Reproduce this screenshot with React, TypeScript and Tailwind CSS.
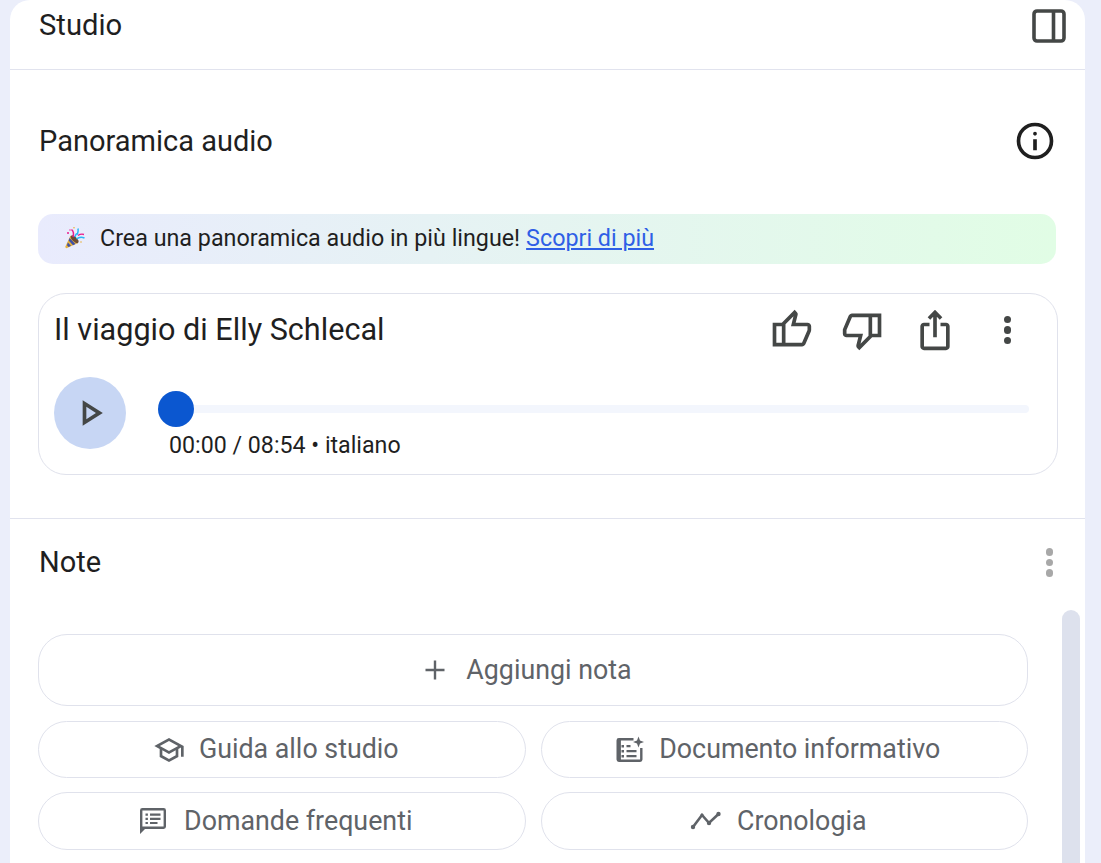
import React from "react";

const P = ({ d, className }: { d: string; className?: string }) => (
  <svg viewBox="0 -960 960 960" fill="currentColor" className={className}>
    <path d={d} />
  </svg>
);

const Party = () => (
  <svg viewBox="0 0 24 24" className="w-[24px] h-[24px]">
    <path d="M7.5 9.5 L15 17 L4 22 Q2.2 22.6 2.4 20.6 Z" fill="#e8b23c" />
    <path d="M6.6 12 L12.5 18 L10 19.2 L5.6 14.6 Z" fill="#3f51a8" />
    <path d="M4.8 16.5 L8 19.8 L5.6 21 L4 19.2 Z" fill="#3f51a8" />
    <ellipse cx="11.6" cy="13.2" rx="2.3" ry="5" transform="rotate(-45 11.6 13.2)" fill="#6b4a35" />
    <path d="M8.5 3.5 Q11.5 6 10 11" stroke="#e91e8c" strokeWidth="1.5" fill="none" />
    <path d="M12 11 Q13 7 14.5 8 Q15.5 5 15 2.5" stroke="#29b6f6" strokeWidth="1.5" fill="none" />
    <path d="M13.5 13 Q17 10 21.5 12" stroke="#29b6f6" strokeWidth="1.5" fill="none" />
    <path d="M15 9.5 Q18 7.5 21 8.5" stroke="#e91e8c" strokeWidth="1.4" fill="none" />
    <circle cx="5" cy="7" r="1" fill="#e91e8c" />
    <circle cx="11" cy="1.8" r="0.8" fill="#e8b23c" />
    <circle cx="18" cy="16" r="0.8" fill="#e8b23c" />
    <circle cx="7" cy="4" r="0.7" fill="#e91e8c" />
  </svg>
);

const Dots = ({ className }: { className: string }) => (
  <div className={`flex flex-col gap-[3px] ${className}`}>
    <span className="w-[7.5px] h-[7.5px] rounded-full bg-current" />
    <span className="w-[7.5px] h-[7.5px] rounded-full bg-current" />
    <span className="w-[7.5px] h-[7.5px] rounded-full bg-current" />
  </div>
);

const Pill = ({ icon, label, h, gap }: { icon: React.ReactNode; label: string; h: string; gap: string }) => (
  <button className={`${h} ${gap} flex-1 min-w-0 rounded-[29px] border border-[#e0e2ec] bg-white flex items-center justify-center pr-[12px] text-[#5f6368] text-[26.8px] font-normal`}>
    {icon}
    <span>{label}</span>
  </button>
);

export default function App() {
  return (
    <div className="h-[863px] overflow-hidden bg-[#ebeefa] pl-[10px] pr-[16px] text-[#1f1f1f] [font-family:Roboto,sans-serif]">
      <div className="h-full w-[1075px] bg-white rounded-t-[20px] overflow-hidden flex flex-col">
        <header className="h-[70px] shrink-0 border-b border-[#e1e3ee] pl-[29px] pr-[19px] flex items-center justify-between">
          <h2 className="text-[29.2px] leading-none -mt-[18px]">Studio</h2>
          <svg viewBox="0 0 34 34" className="w-[34px] h-[34px] -mt-[18px] text-[#444746]" fill="none" stroke="currentColor" strokeWidth="3.6">
            <rect x="2" y="2" width="30" height="30" rx="3" />
            <path d="M21.5 2v30" />
          </svg>
        </header>

        <section className="h-[449px] shrink-0 border-b border-[#e1e3ee] pl-[28px] flex flex-col">
          <div className="h-[144px] shrink-0 flex items-center justify-between pr-[28px]">
            <h3 className="pl-[1px] text-[29px] leading-none mb-[2px]">Panoramica audio</h3>
            <P className="w-[44px] h-[44px] text-[#1f1f1f] mb-[2px]" d="M440-280h80v-240h-80v240Zm40-320q17 0 28.5-11.5T520-640q0-17-11.5-28.5T480-680q-17 0-28.5 11.5T440-640q0 17 11.5 28.5T480-600Zm0 520q-83 0-156-31.5T197-197q-54-54-85.5-127T80-480q0-83 31.5-156T197-763q54-54 127-85.5T480-880q83 0 156 31.5T763-763q54 54 85.5 127T880-480q0 83-31.5 156T763-197q-54 54-127 85.5T480-80Zm0-80q134 0 227-93t93-227q0-134-93-227t-227-93q-134 0-227 93t-93 227q0 134 93 227t227 93Z" />
          </div>
          <div className="w-[1018px] h-[50px] shrink-0 rounded-[15px] bg-linear-to-r from-[#e9ebfd] to-[#e1fde5] flex items-center pl-[25px] pb-[2px] text-[23.3px]">
            <Party />
            <span className="ml-[13px]">Crea una panoramica audio in più lingue!</span>
            <a href="#" className="ml-[6px] text-[#2f5fe6] underline">Scopri di più</a>
          </div>
          <div className="w-[1020px] h-[182px] mt-[29px] shrink-0 rounded-[28px] border border-[#e0e2ec] pl-[15px] flex flex-col">
            <div className="h-[72px] shrink-0 flex items-center">
              <h4 className="text-[30.6px] leading-none flex-1">Il viaggio di Elly Schlecal</h4>
              <div className="flex items-center text-[#444746] pr-[46px] gap-[28px]">
                <P className="w-[44px] h-[44px]" d="M720-120H280v-520l280-280 50 50q7 7 11.5 19t4.5 23v14l-44 174h258q32 0 56 24t24 56v80q0 7-2 15t-4 15L794-168q-9 20-30 34t-44 14Zm-360-80h360l120-280v-80H480l54-220-174 174v406Zm0-406v406-406Zm-80-34v80H160v360h120v80H80v-520h200Z" />
                <P className="w-[44px] h-[44px]" d="M240-840h440v520L400-40l-50-50q-7-7-11.5-19t-4.5-23v-14l44-174H120q-32 0-56-24t-24-56v-80q0-7 2-15t4-15l120-282q9-20 30-34t44-14Zm360 80H240L120-480v80h360l-54 220 174-174v-406Zm0 406v-406 406Zm80 34v-80h120v-360H680v-80h200v520H680Z" />
                <P className="w-[44px] h-[44px]" d="M240-40q-33 0-56.5-23.5T160-120v-440q0-33 23.5-56.5T240-640h120v80H240v440h480v-440H600v-80h120q33 0 56.5 23.5T800-560v440q0 33-23.5 56.5T720-40H240Zm200-280v-447l-64 64-56-57 160-160 160 160-56 57-64-64v447h-80Z" />
                <Dots className="text-[#444746] ml-[19px]" />
              </div>
            </div>
            <div className="flex mt-[11px]">
              <button className="w-[72px] h-[72px] shrink-0 rounded-full bg-[#c7d6f4] flex items-center justify-center text-[#444746]">
                <P className="w-[44px] h-[44px]" d="M320-200v-560l440 280-440 280Zm80-280Zm0 134 210-134-210-134v268Z" />
              </button>
              <div className="ml-[32px] w-[871px] pt-[18px]">
                <div className="relative h-[8px] mt-[10px] bg-[#f3f6fd] rounded-full">
                  <span className="absolute left-0 top-[-14px] w-[36px] h-[36px] rounded-full bg-[#0b57d0]" />
                </div>
                <p className="mt-[21px] pl-[11px] text-[23.2px] leading-none">00:00 / 08:54 • italiano</p>
              </div>
            </div>
          </div>
        </section>

        <section className="flex-1 min-h-0 pl-[28px] flex flex-col">
          <div className="h-[87px] shrink-0 flex items-center justify-between pr-[32px]">
            <h3 className="pl-[1px] text-[29px] leading-none">Note</h3>
            <Dots className="text-[#a8a8a8]" />
          </div>
          <div className="flex-1 flex min-h-0">
            <div className="w-[990px] pt-[28px] flex flex-col">
              <button className="h-[72px] shrink-0 rounded-[29px] border border-[#e0e2ec] flex items-center justify-center gap-[19px] pr-[11px] text-[#5f6368] text-[26.8px]">
                <svg viewBox="0 0 24 24" className="w-[24px] h-[24px]" fill="none" stroke="currentColor" strokeWidth="2.4"><path d="M12 2.5v19M2.5 12h19" /></svg>
                <span>Aggiungi nota</span>
              </button>
              <div className="flex gap-[15px] mt-[15px]">
                <Pill h="h-[57px]" gap="gap-[14px]" label="Guida allo studio" icon={<P className="w-[32px] h-[32px]" d="M480-120 200-272v-240L40-600l440-240 440 240v320h-80v-276l-80 44v240L480-120Zm0-332 274-148-274-148-274 148 274 148Zm0 241 200-108v-151L480-360 280-470v151l200 108Z" />} />
                <Pill h="h-[57px]" gap="gap-[15px]" label="Documento informativo" icon={
                  <svg viewBox="0 0 28 28" fill="currentColor" className="w-[28px] h-[28px]">
                    <path d="M5 3h13v2.4H5.4v19.2h19.2V13H27v11.6A2.4 2.4 0 0 1 24.6 27H3.4A2.4 2.4 0 0 1 1 24.6V5.4A2.4 2.4 0 0 1 3.4 3Z" transform="translate(-.5 -1)" />
                    <path d="M22.5 0.5l1.5 4 4 1.5-4 1.5-1.5 4-1.5-4-4-1.5 4-1.5Z" />
                    <path d="M5.5 9h2.5v2.5H5.5ZM5.5 14h2.5v2.5H5.5ZM5.5 19h2.5v2.5H5.5ZM10.5 14h10v2.2h-10ZM10.5 19h10v2.2h-10ZM10.5 9h4v2.2h-4Z" />
                  </svg>
                } />
              </div>
              <div className="flex gap-[15px] mt-[14px]">
                <Pill h="h-[58px]" gap="gap-[17px]" label="Domande frequenti" icon={
                  <svg viewBox="0 0 28 28" fill="currentColor" className="w-[28px] h-[28px]">
                    <path d="M1 27V3.4A2.4 2.4 0 0 1 3.4 1h21.2A2.4 2.4 0 0 1 27 3.4v16.2a2.4 2.4 0 0 1-2.4 2.4H6Zm2.4-7.4h21.2V3.4H3.4Z" />
                    <path d="M6.5 6.5h2.4v2.2H6.5ZM6.5 10.7h2.4v2.2H6.5ZM6.5 14.9h2.4v2.2H6.5ZM11 6.5h10.5v2.2H11ZM11 10.7h10.5v2.2H11ZM11 14.9h7.5v2.2H11Z" />
                  </svg>
                } />
                <Pill h="h-[58px]" gap="gap-[15px]" label="Cronologia" icon={
                  <svg viewBox="0 0 32 24" className="w-[32px] h-[24px]" fill="none" stroke="currentColor" strokeWidth="2.6">
                    <path d="M3 18 L12 6 L19 14 L28.5 5" />
                    <circle cx="3" cy="18" r="2.2" fill="currentColor" stroke="none" />
                    <circle cx="12" cy="6" r="1.6" fill="currentColor" stroke="none" />
                    <circle cx="19" cy="14" r="2.2" fill="currentColor" stroke="none" />
                    <circle cx="28.5" cy="5" r="2.2" fill="currentColor" stroke="none" />
                  </svg>
                } />
              </div>
            </div>
            <div className="w-[18px] ml-[34px] mt-[4px] bg-[#dde1ed] rounded-t-full shrink-0" />
          </div>
        </section>
      </div>
    </div>
  );
}
